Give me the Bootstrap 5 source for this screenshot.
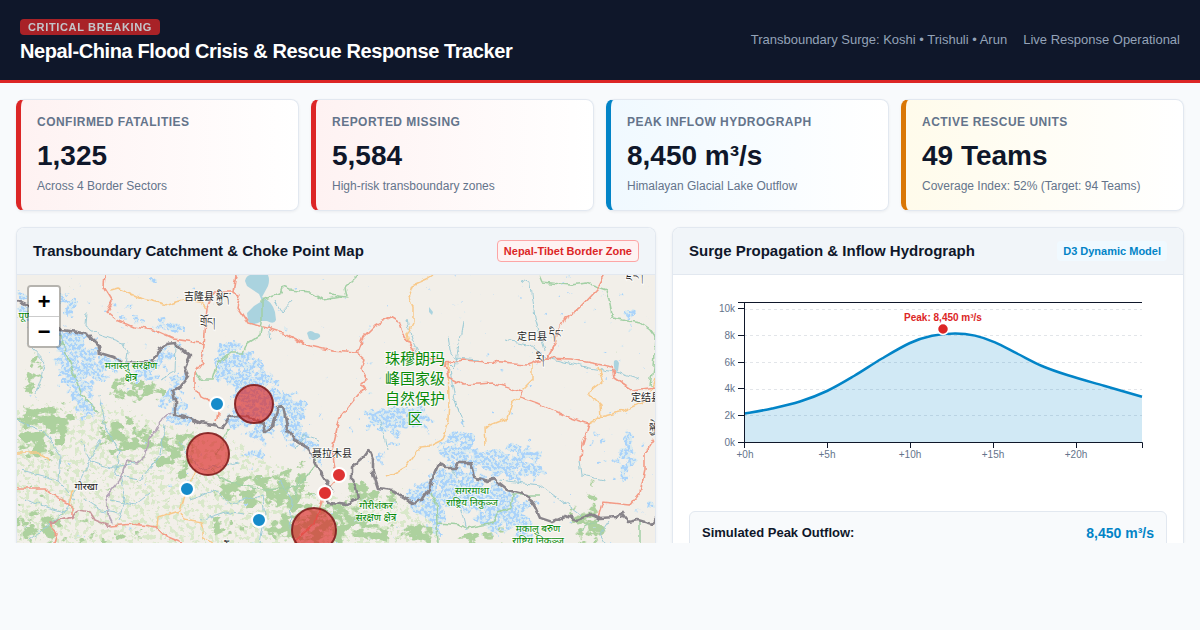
<!DOCTYPE html>
<html lang="en">
<head>
<meta charset="utf-8">
<meta name="viewport" content="width=device-width, initial-scale=1">
<title>Nepal-China Flood Crisis &amp; Rescue Response Tracker</title>
<link href="https://cdn.jsdelivr.net/npm/bootstrap@5.3.0/dist/css/bootstrap.min.css" rel="stylesheet">
<style>
:root { --ink:#0f172a; --muted:#64748b; --line:#e2e8f0; --red:#dc2626; --blue:#0284c7; --amber:#d97706; }
body { font-family:"Liberation Sans",Arial,sans-serif; background:#f8fafc; color:var(--ink); line-height:normal; }
.app-shell { height:calc(100vh - 87px); min-height:456px; }
.top-bar { background:var(--ink); border-bottom:3px solid var(--red); padding:16px 20px; min-height:83px; }
.headline { padding-top:2px; }
.alert-tag { background:var(--red); color:#fff; opacity:.75; font-size:11px; line-height:12px; font-weight:700; letter-spacing:.06em; padding:2px 8px; border-radius:4px; }
.site-title { font-size:20px; line-height:24px; font-weight:700; letter-spacing:-.02em; color:#fff; margin:4px 0 0; }
.top-meta { font-size:13px; color:#94a3b8; gap:16px; padding-bottom:2px; }
.board { padding:16px 16px 0; gap:16px; min-height:0; }
.stat-grid { display:grid; grid-template-columns:repeat(4,minmax(0,1fr)); gap:12px; }
.stat { --tone:var(--red); --tint:#fef2f2; border:1px solid var(--line); border-left:5px solid var(--tone); border-radius:8px; background:linear-gradient(90deg,var(--tint),#fff); padding:15px 16px 17px; box-shadow:0 1px 3px rgba(15,23,42,.06); }
.stat.flow { --tone:var(--blue); --tint:#f0f9ff; }
.stat.crew { --tone:var(--amber); --tint:#fffbeb; }
.stat-name { font-size:12px; line-height:14px; font-weight:700; letter-spacing:.04em; color:var(--muted); }
.stat-value { font-size:28px; line-height:32px; font-weight:700; margin:11px 0 7px; }
.stat-note { font-size:12px; line-height:14px; color:var(--muted); }
.panels { display:grid; grid-template-columns:5fr 4fr; gap:16px; min-height:0; }
.panel { border:1px solid var(--line); border-bottom:0; border-radius:8px 8px 0 0; background:#fff; box-shadow:0 1px 3px rgba(15,23,42,.06); overflow:hidden; min-width:0; min-height:0; }
.panel-head { background:#f1f5f9; border-bottom:1px solid var(--line); padding:12px 16px; height:47px; flex:none; }
.panel-head h2 { font-size:15px; line-height:18px; font-weight:700; margin:0; }
.pill { font-size:11px; line-height:14px; font-weight:700; padding:3px 6px; border-radius:4px; }
.pill.zone { color:var(--red); background:#fef2f2; border:1px solid #fca5a5; }
.pill.model { color:var(--blue); background:#f0f9ff; }
.map-view { background:#f2efe9; min-height:0; }
.map-view > svg { display:block; width:100%; height:100%; }
.zoomer { position:absolute; top:10px; left:10px; border:2px solid rgba(0,0,0,.25); border-radius:4px; background-clip:padding-box; }
.zoomer button { width:30px; height:29px; border:0; background:#fff; color:#000; font:bold 22px/34px "Liberation Mono",monospace; padding:0; overflow:hidden; }
.zoomer button:first-child { border-bottom:1px solid #ccc; height:30px; border-radius:2px 2px 0 0; }
.zoomer button:last-child { border-radius:0 0 2px 2px; }
.chart { display:block; width:100%; height:auto; margin-bottom:20px; }
.chart text { font-size:10px; fill:var(--muted); }
.chart .peak { font-weight:700; fill:var(--red); }
.summary { border:1px solid var(--line); border-radius:6px; background:#f8fafc; padding:12px; height:80px; flex:none; font-size:13px; line-height:18px; font-weight:700; }
.summary output { color:var(--blue); font-size:14px; }
.place { font-family:"Noto Sans","Noto Sans CJK SC",sans-serif; font-size:10px; fill:#222; text-anchor:middle; paint-order:stroke; stroke:#fff; stroke-opacity:.7; stroke-width:2px; }
.reserve { fill:#088a08; }
.big { font-size:15px; }
@media (max-width:800px) { .app-shell { height:auto; } .stat-grid { grid-template-columns:1fr 1fr; } .panels { grid-template-columns:1fr; } .map-view { aspect-ratio:2; } }
</style>
</head>
<body>
<div class="app-shell d-flex flex-column overflow-hidden">
<header class="top-bar d-flex justify-content-between align-items-center flex-shrink-0">
  <div class="headline d-flex flex-column align-items-start">
    <span class="alert-tag">CRITICAL BREAKING</span>
    <h1 class="site-title">Nepal-China Flood Crisis &amp; Rescue Response Tracker</h1>
  </div>
  <div class="top-meta d-flex"><span>Transboundary Surge: Koshi • Trishuli • Arun</span><span>Live Response Operational</span></div>
</header>
<main class="board d-flex flex-column flex-grow-1">
  <section class="stat-grid">
    <div class="stat"><div class="stat-name">CONFIRMED FATALITIES</div><div class="stat-value">1,325</div><div class="stat-note">Across 4 Border Sectors</div></div>
    <div class="stat"><div class="stat-name">REPORTED MISSING</div><div class="stat-value">5,584</div><div class="stat-note">High-risk transboundary zones</div></div>
    <div class="stat flow"><div class="stat-name">PEAK INFLOW HYDROGRAPH</div><div class="stat-value">8,450 m³/s</div><div class="stat-note">Himalayan Glacial Lake Outflow</div></div>
    <div class="stat crew"><div class="stat-name">ACTIVE RESCUE UNITS</div><div class="stat-value">49 Teams</div><div class="stat-note">Coverage Index: 52% (Target: 94 Teams)</div></div>
  </section>
  <section class="panels flex-grow-1">
    <article class="panel d-flex flex-column">
      <div class="panel-head d-flex justify-content-between align-items-center">
        <h2>Transboundary Catchment &amp; Choke Point Map</h2>
        <span class="pill zone">Nepal-Tibet Border Zone</span>
      </div>
      <div class="map-view position-relative flex-grow-1">
        <svg viewBox="17 275 638 268" preserveAspectRatio="xMidYMin slice" role="img" aria-label="Catchment map">
          <defs>
            <filter id="wood" filterUnits="userSpaceOnUse" x="0" y="260" width="680" height="300" color-interpolation-filters="sRGB">
              <feGaussianBlur in="SourceAlpha" stdDeviation="5" result="b"/>
              <feTurbulence type="fractalNoise" baseFrequency=".09 .12" numOctaves="5" seed="4" result="n"/>
              <feComposite in="b" in2="n" operator="arithmetic" k2=".5" k3="1" k4="-.1"/>
              <feComponentTransfer result="m"><feFuncA type="linear" slope="12" intercept="-9.8"/></feComponentTransfer>
              <feFlood flood-color="#add19e"/><feComposite in2="m" operator="in"/>
            </filter>
            <filter id="scrub" filterUnits="userSpaceOnUse" x="0" y="260" width="680" height="300" color-interpolation-filters="sRGB">
              <feGaussianBlur in="SourceAlpha" stdDeviation="7" result="b"/>
              <feTurbulence type="fractalNoise" baseFrequency=".2" numOctaves="4" seed="9" result="n"/>
              <feComposite in="b" in2="n" operator="arithmetic" k2=".5" k3="1" k4="-.1"/>
              <feComponentTransfer result="m"><feFuncA type="linear" slope="10" intercept="-9.3"/></feComponentTransfer>
              <feFlood flood-color="#cfe5bd"/><feComposite in2="m" operator="in"/>
            </filter>
            <filter id="ice" filterUnits="userSpaceOnUse" x="0" y="260" width="680" height="300" color-interpolation-filters="sRGB">
              <feGaussianBlur in="SourceAlpha" stdDeviation="5" result="b"/>
              <feTurbulence type="fractalNoise" baseFrequency=".12" numOctaves="4" seed="12" result="n"/>
              <feComposite in="b" in2="n" operator="arithmetic" k2=".5" k3="1" k4="-.1"/>
              <feComponentTransfer result="m"><feFuncA type="linear" slope="14" intercept="-9.8"/></feComponentTransfer>
              <feFlood flood-color="#dcebee"/><feComposite in2="m" operator="in" result="pale"/>
              <feTurbulence type="fractalNoise" baseFrequency=".36" numOctaves="2" seed="3"/>
              <feComponentTransfer result="d"><feFuncA type="linear" slope="9" intercept="-4"/></feComponentTransfer>
              <feFlood flood-color="#a9d2fa"/><feComposite in2="d" operator="in"/><feComposite in2="m" operator="in" result="dots"/>
              <feMerge><feMergeNode in="pale"/><feMergeNode in="dots"/></feMerge>
            </filter>
            <filter id="wiggle" filterUnits="userSpaceOnUse" x="0" y="260" width="680" height="300" color-interpolation-filters="sRGB">
              <feTurbulence type="fractalNoise" baseFrequency=".12" numOctaves="2" seed="7" result="n"/>
              <feDisplacementMap in="SourceGraphic" in2="n" scale="6" xChannelSelector="R" yChannelSelector="G"/>
            </filter>
          </defs>
          <rect x="0" y="260" width="680" height="300" fill="#f2efe9"/>
          <path filter="url(#scrub)" d="M0 400H110L180 425 250 440 320 490V560H0ZM320 490H440V560H320Z"/>
          <g filter="url(#wood)">
            <path d="M17 408L45 400 65 405 78 415 70 440 50 458 17 460ZM28 350L45 355 44 385 30 400 22 385ZM105 380L135 372 178 390 170 402 120 405 108 395ZM92 425L120 415 152 425 150 455 130 462 98 450ZM160 432L195 430 190 460 150 470ZM175 465L195 460 188 490 174 480ZM212 480L260 475 305 460 316 478 305 510 265 508 215 500ZM290 500L350 500 385 520 400 543 290 543ZM210 522L240 520 245 534 215 535ZM17 510L60 515 62 543 17 543ZM60 538L130 533 150 543 60 543ZM275 515L300 510 300 543 260 543ZM345 475L385 485 405 500 385 508 350 502ZM562 505L590 505 608 522 612 543 560 543 575 525ZM585 480L595 478 600 505 588 505ZM395 518L440 525 440 543 400 543ZM460 530L500 525 510 543 455 543Z"/>
            <path opacity=".35" d="M17 460H100L120 480 90 543H17ZM100 465L160 470 175 500 150 543H110ZM190 500L300 505V543H190Z"/>
          </g>
          <g filter="url(#ice)">
            <path d="M17 290L30 298 32 318 20 322ZM62 298L76 290 80 305 66 325ZM52 325L90 335 96 352 118 358 122 372 100 375 90 398 104 415 82 420 70 400 58 375ZM128 360L152 362 165 345 178 352 158 378 130 385ZM176 365L185 378 182 400 195 425 175 428 162 408 166 392ZM212 362L225 340 232 334 240 352 252 350 268 372 285 390 305 402 306 430 316 445 320 470 305 452 286 440 275 430 262 445 250 435 225 428 235 395 230 378 212 382ZM240 452L265 448 268 458 242 460ZM355 422L375 410 390 405 425 405 432 428 405 430 398 445 385 432ZM430 452L445 440 455 427 470 430 482 455 495 447 530 445 545 460 540 480 500 480 480 470 450 460ZM402 492L430 475 440 465 472 470 490 483 520 495 535 515 530 543 510 530 485 535 475 515 450 505 438 543 425 520 405 505ZM345 430L355 425 352 445ZM375 455L385 452 386 465 374 466ZM618 435L632 430 636 450 630 480 620 482ZM645 505L655 500V515L645 512Z"/>
            <path d="M112 308l8-2 20 10 2 8-14-4ZM155 322l12-1 14 4 3 10-8 1-6-8-14 1ZM150 281l10 1-2 4-8-1ZM625 312l8-3 3 13-6 2ZM592 438l10-4v8l-6 4ZM597 462l10-4 2 8-8 3ZM315 418l10 1v6l-9-1ZM563 283l9-1v6l-8-1Z" stroke="#000" stroke-width="3"/>
          </g>
          <g fill="#aad3df"><path d="M245 281Q246 276 250 275H268Q270 280 268 286L262 297Q272 301 275 312L276 320Q274 325 267 321H262Q252 327 248 321L247 313 254 306 262 301 259 294 247 286ZM307 333q3-4 8 0 6 0 5 4-5 5-11 2ZM614 361q3-3 5 2l-1 8q-5 0-4-10ZM429 307l4 5-1 3-3-3Z"/></g>
          <g filter="url(#wiggle)" fill="none" stroke-linejoin="round">
            <path stroke="#9dcbd6" stroke-width="1" d="M86 312L85 325 100 335 123 343 127 352 125 364M176 345L175 372 160 380M32 348L45 362 40 382 35 395M448 363L455 370 457 355 463 322M448 335L450 350 455 358 480 360M520 278L531 285 535 318 545 350M504 339L530 345 547 358 590 368 615 372 640 380M407 320L412 340 418 352M450 370L455 400 464 427M275 300L282 312 293 300M268 325L270 340M17 420L45 432 60 455 58 480 75 500M100 395L106 430 120 450 115 475 140 480 160 455 165 425M80 440L92 462 110 468 140 462M30 540L65 512 80 480 100 440M180 442L200 470 240 462M190 500L215 490 230 503 262 495 265 515 260 543M110 500L135 505 150 493M200 520L225 512 245 515M280 480L292 500 290 530M320 440L305 435 295 450M455 495L462 510 467 530M500 480L540 485 560 500 580 515M580 460L582 475 605 480M380 420L385 440 387 450M450 465L470 500M610 520L600 535 605 543M20 470L40 475 58 480M25 500L50 508 65 512M120 475L125 500 118 520M85 500L100 510 120 512"/>
            <path stroke="#a3d0a5" stroke-width="1.5" d="M340 297L323 300 310 292 290 290 283 287 281 293 262 300V323L260 335 247 343 243 353 230 353 218 363 213 380 203 380 195 372M330 295L347 297 345 288 358 275M539 275L542 282 570 285 587 283 607 290 613 318 623 320 640 323 650 330 655 337 653 367 650 385M60 335L72 370 82 395 98 413M230 428L215 455M210 470L225 480 240 485 270 490 300 485 315 465 317 450M430 493L436 503 437 523 438 543M437 523L463 525 467 528 493 523 498 513 512 508 514 495 540 495M640 522V543M295 500L300 475M600 518L580 530"/>
            <path stroke="#b5a5b8" stroke-width="1.7" d="M173 413L163 417 157 430 148 440 145 457 138 463 127 460 118 483 106 497 108 513 113 523"/>
            <g stroke="#f8c98a" stroke-width="1.5"><path d="M110 290L117 288 140 298 167 305 183 300 200 302 206 308M433 275L427 279 413 285 409 297 413 307 413 323 407 335 409 342M448 363L449 400 448 420 442 440 430 446 420 447 405 467 387 477M532 363V380L522 390M520 397L512 403 507 418 485 427 486 445M598 367L603 382 588 393 600 405 601 417 589 424 601 417 620 412 648 400 655 378M17 453H37L50 460M195 470L187 490 180 510 158 517 157 527M180 512L184 520 202 523 205 537 213 543M73 490L70 505"/></g>
            <g stroke="#f39b86" stroke-width="1.6"><path d="M105 275L104 287 112 300 107 312 117 320 133 327 153 330 173 339 200 343 204 346M236 275L233 292 213 292 207 308 204 346 202 363 195 373 195 387 200 397 207 399 217 404 218 413 216 422M233 292L240 295 237 307 248 323 267 328 283 333 307 345 333 351 357 353 363 337 375 325 390 317 400 323 405 338 417 353 445 363 463 360 527 365 547 358 570 359 613 367 615 378 633 390 655 387M357 353L365 360 362 368 367 380 360 383 365 390 358 395 340 417 332 450 335 468 338 478 325 493 320 507 315 523 293 543M445 363L448 377 463 385 493 383 522 392 520 397 537 403 563 415 589 424 582 447 581 460M605 275L597 290 580 308 565 318 558 332 555 343 547 358M655 438L645 453V470L640 493 630 505 603 502 598 517M17 488H43L53 495 72 505 72 517 50 523 57 534 54 543M110 526L133 524 157 527 167 537 182 543"/></g>
            <path stroke="#c8969b" stroke-width="1.7" d="M50 523L72 517 78 510 90 512 95 520 110 526"/>
            <path stroke="#88848a" stroke-width="2.6" d="M17 300L28 305 45 318 60 330 77 332 87 334 99 346 100 353 113 357 123 363 152 362 160 348 167 344 176 343 183 350 190 356 185 367 188 377 182 385 173 390 175 400V415L185 417 200 423 213 425 223 427 230 417 237 416 253 418 263 423 265 432 273 426 278 407 283 406 287 427 295 440 308 448 317 467 325 480 332 490 322 497 330 502 347 504 358 498 356 488 352 480V467L363 458 369 450 373 460V473L378 488 392 490 413 503 422 500 429 490 433 477 439 463 447 468 455 468 458 463H470L474 477 487 481 493 479 507 490 527 495 535 507 540 518 552 522 565 516 577 520 593 514 600 518 617 517 621 512 628 522 638 520 652 524 656 518"/>
          </g>
          <g class="place">
            <text x="199" y="300">吉隆县</text><text x="223" y="300">སྐྱིད་</text><text x="207" y="325">གྲོང།</text>
            <text x="532" y="340">定日县</text><text x="556" y="337">དིང་</text><text x="540" y="362">རི།</text>
            <text x="332" y="457">聂拉木县</text><text x="646" y="401">定结县</text><text x="652" y="430">སྐྱེ</text><text x="634" y="279">རྫོང་།</text>
            <text x="86" y="490">गोरखा</text><text x="212" y="550">काठमाडौँ</text>
            <g class="reserve">
              <text x="25" y="319">पूर्ण</text><text x="131" y="369">मनास्लु संरक्षण</text><text x="131" y="381">क्षेत्र</text>
              <text x="376" y="509">गौरीशंकर</text><text x="376" y="521">संरक्षण क्षेत्र</text>
              <text x="472" y="494">सगरमाथा</text><text x="472" y="506">राष्ट्रिय निकुञ्ज</text>
              <text x="538" y="532">मकालु बरुण</text><text x="538" y="544">राष्ट्रिय निकुञ्ज</text>
              <g class="big"><text x="415" y="364">珠穆朗玛</text><text x="415" y="384">峰国家级</text><text x="415" y="404">自然保护</text><text x="415" y="424">区</text></g>
            </g>
          </g>
          <g fill="#dc2626" fill-opacity=".65" stroke="#7f1d1d" stroke-opacity=".9" stroke-width="2"><circle cx="254" cy="404" r="19"/><circle cx="208" cy="454" r="21"/><circle cx="314" cy="530" r="22"/></g>
          <g stroke="#fff" stroke-width="2"><g fill="#168bca"><circle cx="217" cy="404" r="7"/><circle cx="187" cy="489" r="7"/><circle cx="259" cy="520" r="7"/></g><g fill="#de3333"><circle cx="339" cy="475" r="7"/><circle cx="325" cy="493" r="7"/></g></g>
        </svg>
        <div class="zoomer d-flex flex-column"><button type="button" aria-label="Zoom in">+</button><button type="button" aria-label="Zoom out">−</button></div>
      </div>
    </article>
    <article class="panel d-flex flex-column">
      <div class="panel-head d-flex justify-content-between align-items-center">
        <h2>Surge Propagation &amp; Inflow Hydrograph</h2>
        <span class="pill model">D3 Dynamic Model</span>
      </div>
      <div class="p-3 d-flex flex-column">
        <svg class="chart" viewBox="689 291 478 200" role="img" aria-label="Inflow hydrograph">
          <g stroke="#e2e5e9" stroke-dasharray="3 3"><path d="M744 309.5H1142M744 335.5H1142M744 362.5H1142M744 389.5H1142M744 415.5H1142"/></g>
          <path id="area" fill="#0284c7" fill-opacity=".18"/>
          <path id="curve" fill="none" stroke="#0284c7" stroke-width="2.5"/>
          <path fill="none" stroke="#0f172a" d="M738 302.5H1142M738 442.5H1142.500V448M744.500 302V448M738 308.500H744M738 335.500H744M738 362.500H744M738 388.500H744M738 415.500H744M827.500 442V448M910.500 442V448M993.500 442V448M1076.500 442V448"/>
          <g text-anchor="end"><text x="735" y="312">10k</text><text x="735" y="339">8k</text><text x="735" y="366">6k</text><text x="735" y="392">4k</text><text x="735" y="419">2k</text><text x="735" y="446">0k</text></g>
          <g text-anchor="middle"><text x="745" y="458">+0h</text><text x="827" y="458">+5h</text><text x="910" y="458">+10h</text><text x="993" y="458">+15h</text><text x="1076" y="458">+20h</text><text class="peak" x="943" y="321">Peak: 8,450 m³/s</text></g>
          <circle cx="943" cy="329" r="5.5" fill="#dc2626" stroke="#fff" stroke-width="1.5"/>
        </svg>
        <div class="summary d-flex justify-content-between"><span>Simulated Peak Outflow:</span><output>8,450 m³/s</output></div>
      </div>
    </article>
  </section>
</main>
</div>
<script>
// Smooth curve through the hydrograph samples
const pts = [[744,413.8],[772,408.5],[800,401.5],[827,391],[854,376],[882,358.5],[910,343],[932,335.8],[955,333.4],[975,335.6],[995,342.3],[1018,354],[1042,366],[1068,375.3],[1104,385.8],[1142,396.7]];
let d = 'M' + pts[0];
for (let i = 0; i < pts.length - 1; i++) {
  const a = pts[i - 1] || pts[i], b = pts[i], c = pts[i + 1], e = pts[i + 2] || c;
  d += `C${b[0] + (c[0] - a[0]) / 6},${b[1] + (c[1] - a[1]) / 6} ${c[0] - (e[0] - b[0]) / 6},${c[1] - (e[1] - b[1]) / 6} ${c}`;
}
document.getElementById('curve').setAttribute('d', d);
document.getElementById('area').setAttribute('d', d + 'V442H744Z');
</script>
<script src="https://cdn.jsdelivr.net/npm/bootstrap@5.3.0/dist/js/bootstrap.bundle.min.js"></script>
</body>
</html>
